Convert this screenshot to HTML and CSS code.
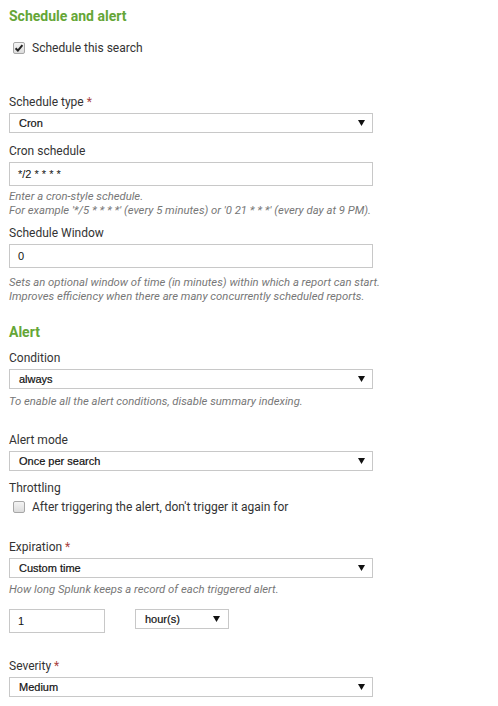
FILE: index.html
```html
<!DOCTYPE html>
<html>
<head>
<meta charset="utf-8">
<link rel="stylesheet" href="styles.css">
</head>
<body>
<div class="form">
  <h2 class="section-title">Schedule and alert</h2>
  <div class="check-row first-check">
    <span class="checkbox checked">
      <svg viewBox="0 0 12 12" width="12" height="12"><path d="M2.6 6.2 L4.9 8.6 L9.4 3.2" fill="none" stroke="#222" stroke-width="2"/></svg>
    </span>
    <span class="check-label">Schedule this search</span>
  </div>

  <div class="field f-schedtype">
    <div class="label">Schedule type <span class="req">*</span></div>
    <div class="select"><span>Cron</span><svg class="caret" viewBox="0 0 7 6" width="7" height="6"><path d="M0 0H7L3.5 6Z" fill="#111"/></svg></div>
  </div>

  <div class="field f-cron">
    <div class="label">Cron schedule</div>
    <div class="input">*/2 * * * *</div>
    <div class="help">Enter a cron-style schedule.<br>For example '*/5 * * * *' (every 5 minutes) or '0 21 * * *' (every day at 9 PM).</div>
  </div>

  <div class="field f-window">
    <div class="label">Schedule Window</div>
    <div class="input">0</div>
    <div class="help">Sets an optional window of time (in minutes) within which a report can start.<br>Improves efficiency when there are many concurrently scheduled reports.</div>
  </div>

  <h2 class="section-title alert-title">Alert</h2>

  <div class="field f-condition">
    <div class="label">Condition</div>
    <div class="select"><span>always</span><svg class="caret" viewBox="0 0 7 6" width="7" height="6"><path d="M0 0H7L3.5 6Z" fill="#111"/></svg></div>
    <div class="help">To enable all the alert conditions, disable summary indexing.</div>
  </div>

  <div class="field f-mode">
    <div class="label">Alert mode</div>
    <div class="select"><span>Once per search</span><svg class="caret" viewBox="0 0 7 6" width="7" height="6"><path d="M0 0H7L3.5 6Z" fill="#111"/></svg></div>
  </div>

  <div class="field f-throttle">
    <div class="label">Throttling</div>
    <div class="check-row">
      <span class="checkbox"></span>
      <span class="check-label">After triggering the alert, don't trigger it again for</span>
    </div>
  </div>

  <div class="field f-expiration">
    <div class="label">Expiration <span class="req">*</span></div>
    <div class="select"><span>Custom time</span><svg class="caret" viewBox="0 0 7 6" width="7" height="6"><path d="M0 0H7L3.5 6Z" fill="#111"/></svg></div>
    <div class="help">How long Splunk keeps a record of each triggered alert.</div>
    <div class="time-row">
      <div class="input small">1</div>
      <div class="select unit"><span>hour(s)</span><svg class="caret" viewBox="0 0 7 6" width="7" height="6"><path d="M0 0H7L3.5 6Z" fill="#111"/></svg></div>
    </div>
  </div>

  <div class="field f-severity">
    <div class="label">Severity <span class="req">*</span></div>
    <div class="select"><span>Medium</span><svg class="caret" viewBox="0 0 7 6" width="7" height="6"><path d="M0 0H7L3.5 6Z" fill="#111"/></svg></div>
  </div>
</div>
</body>
</html>
```
FILE: styles.css
```css
html, body {
  margin: 0;
  padding: 0;
  background: #fff;
}
body {
  font-family: Roboto, "Liberation Sans", sans-serif;
  color: #333;
}
.form {
  width: 364px;
  padding: 8px 0 0 9px;
}
.section-title {
  margin: 0;
  font-size: 14px;
  line-height: 17px;
  font-weight: 700;
  color: #65a637;
}
.alert-title {
  margin-top: 20px;
}
.check-row {
  display: flex;
  align-items: center;
  height: 16px;
  padding-left: 4px;
}
.first-check {
  margin-top: 15px;
}
.checkbox {
  box-sizing: border-box;
  width: 12px;
  height: 12px;
  border: 1px solid #a7a7a7;
  border-radius: 2px;
  background: linear-gradient(#f4f4f4, #dcdcdc);
  display: flex;
  align-items: center;
  justify-content: center;
  flex: none;
}
.checkbox svg {
  display: block;
  margin: -1px;
}
.check-label {
  margin-left: 7px;
  font-size: 12px;
  line-height: 16px;
  color: #333;
  white-space: nowrap;
}
.field {
  margin-top: 10px;
}
.f-schedtype {
  margin-top: 38px;
}
.f-window {
  margin-top: 7px;
}
.f-window .help {
  margin-top: 8px;
}
.f-condition {
  margin-top: 9px;
}
.f-condition .help {
  margin-top: 6px;
}
.f-mode {
  margin-top: 23px;
}
.f-throttle {
  margin-top: 9px;
}
.f-throttle .check-row {
  margin-top: 2px;
}
.f-expiration {
  margin-top: 24px;
}
.f-expiration .help {
  margin-top: 5px;
}
.f-severity {
  margin-top: 25px;
}
.label {
  font-size: 12px;
  line-height: 16px;
  color: #333;
  margin-bottom: 3px;
}
.req {
  color: #a94442;
}
.select {
  box-sizing: border-box;
  height: 20px;
  border: 1px solid #c8c8c8;
  background: #fff;
  display: flex;
  align-items: center;
  justify-content: space-between;
  padding: 0 7px 0 9px;
  font-family: "Liberation Sans", Arial, sans-serif;
  font-size: 11px;
  color: #111;
  -webkit-text-stroke: 0.2px #111;
}
.caret {
  display: block;
}
.input {
  box-sizing: border-box;
  height: 24px;
  border: 1px solid #c8c8c8;
  background: #fff;
  padding: 0 8px;
  display: flex;
  align-items: center;
  font-family: "Liberation Sans", Arial, sans-serif;
  font-size: 11px;
  color: #111;
}
.help {
  margin-top: 4px;
  font-size: 11.3px;
  line-height: 14px;
  font-style: italic;
  color: #777;
  white-space: nowrap;
}
.time-row {
  display: flex;
  align-items: flex-start;
  gap: 30px;
  margin-top: 12px;
}
.input.small {
  width: 96px;
}
.select.unit {
  width: 94px;
  padding-right: 8px;
}
```
